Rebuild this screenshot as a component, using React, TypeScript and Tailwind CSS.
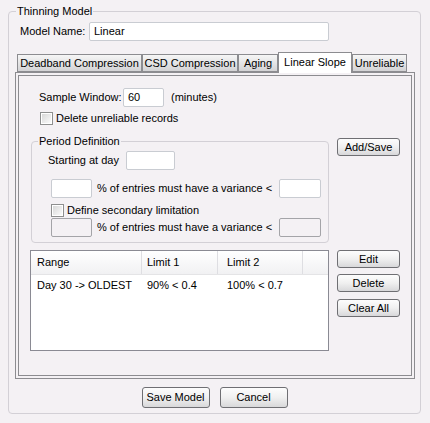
import React from "react";

const font = "font-['Liberation_Sans',Arial,sans-serif]";

function Btn({ label, w }: { label: string; w: string }) {
  return (
    <button
      className={`${w} h-[18px] flex items-center justify-center rounded-[3px] border border-[#6f6f73] bg-gradient-to-b from-[#fdfdfd] via-[#f0f0f0] to-[#d8d8da] text-[11px] leading-none text-black`}
    >
      {label}
    </button>
  );
}

function CheckBox({ label }: { label: string }) {
  return (
    <div className="flex items-center h-[13px]">
      <div className="w-[13px] h-[13px] border border-[#8e8f8f] bg-white p-[1px]">
        <div className="w-full h-full bg-gradient-to-br from-[#d8d8d8] to-[#fbfbfb]" />
      </div>
      <span className="ml-[3px] text-[11px] leading-none">{label}</span>
    </div>
  );
}

function Field({ w, disabled, value }: { w: string; disabled?: boolean; value?: string }) {
  return (
    <div
      className={`${w} h-[19px] rounded-[2px] border flex items-center pl-[4px] text-[11px] ${
        disabled ? "border-[#a4a4a8] bg-[#f4f1f4]" : "border-[#c9ccd2] bg-white"
      }`}
    >
      {value}
    </div>
  );
}

const tabs = [
  { name: "Deadband Compression", w: "w-[125px]" },
  { name: "CSD Compression", w: "w-[96px]" },
  { name: "Aging", w: "w-[40px]" },
  { name: "Linear Slope", w: "w-[74px]", active: true },
  { name: "Unreliable", w: "w-[55px]" },
];

const rows = [{ range: "Day 30 -> OLDEST", l1: "90% < 0.4", l2: "100% < 0.7" }];

export default function App() {
  return (
    <div className={`w-[430px] h-[423px] bg-[#f4f1f4] pt-[11px] pl-[8px] text-black ${font}`}>
      <div className="relative w-[413px] h-[403px] rounded-[4px] border border-[#d3d0d6]">
        <span className="absolute -top-[8px] left-[7px] px-[1px] bg-[#f4f1f4] text-[11px] leading-[14px]">
          Thinning Model
        </span>

        {/* model name */}
        <div className="flex items-center mt-[10px] pl-[11px]">
          <span className="w-[69px] text-[11px]">Model Name:</span>
          <Field w="w-[240px]" value="Linear" />
        </div>

        {/* tabs + panel */}
        <div className="ml-[6px] mt-[10px] w-[400px]">
          <div className="flex items-end h-[21px] pl-[2px]">
            {tabs.map((t) =>
              t.active ? (
                <div
                  key={t.name}
                  className={`${t.w} h-[21px] -mb-[1px] relative z-10 border border-b-0 border-[#8c8c90] bg-white flex items-start justify-center pt-[3px] text-[11px] leading-[13px]`}
                >
                  {t.name}
                </div>
              ) : (
                <div
                  key={t.name}
                  className={`${t.w} h-[18px] border border-[#8c8c90] bg-gradient-to-b from-[#f6f6f6] to-[#d3d3d5] flex items-center justify-center text-[11px] leading-none`}
                >
                  {t.name}
                </div>
              )
            )}
          </div>
          <div className="h-[307px] border border-[#8c8c90] p-[2px]">
            <div className="h-full border border-[#8c8c90]">
              {/* sample window */}
              <div className="flex items-center mt-[12px] pl-[20px]">
                <span className="w-[84px] text-[11px]">Sample Window:</span>
                <Field w="w-[41px]" value="60" />
                <span className="ml-[7px] text-[11px]">(minutes)</span>
              </div>
              <div className="mt-[5px] pl-[21px]">
                <CheckBox label="Delete unreliable records" />
              </div>

              {/* period definition + add/save */}
              <div className="flex items-start mt-[14px] pl-[12px]">
                <div className="relative mt-[2px] w-[298px] h-[102px] rounded-[4px] border border-[#d3d0d6] pl-[16px]">
                  <span className="absolute -top-[8px] left-[6px] px-[1px] bg-[#f4f1f4] text-[11px] leading-[14px]">
                    Period Definition
                  </span>
                  <div className="flex items-center mt-[9px]">
                    <span className="w-[78px] text-[11px]">Starting at day</span>
                    <Field w="w-[49px]" />
                  </div>
                  <div className="flex items-center mt-[9px] pl-[3px]">
                    <Field w="w-[41px]" />
                    <span className="ml-[5px] w-[182px] text-[11px]">% of entries must have a variance &lt;</span>
                    <Field w="w-[42px]" />
                  </div>
                  <div className="mt-[6px] pl-[3px]">
                    <CheckBox label="Define secondary limitation" />
                  </div>
                  <div className="flex items-center mt-[1px] pl-[3px]">
                    <Field w="w-[41px]" disabled />
                    <span className="ml-[5px] w-[182px] text-[11px]">% of entries must have a variance &lt;</span>
                    <Field w="w-[42px]" disabled />
                  </div>
                </div>
                <div className="ml-[8px] -mt-[1px]">
                  <Btn label="Add/Save" w="w-[63px]" />
                </div>
              </div>

              {/* table + actions */}
              <div className="flex items-start mt-[7px] pl-[11px]">
                <div className="w-[299px] h-[101px] border border-[#8a8a93] bg-white">
                  <div className="flex h-[24px] bg-gradient-to-b from-white to-[#f1f1f3] border-b border-[#e4e4e6] text-[11px]">
                    <div className="w-[111px] border-r border-[#dedee2] flex items-center pl-[6px]">Range</div>
                    <div className="w-[76px] border-r border-[#dedee2] flex items-center pl-[5px]">Limit 1</div>
                    <div className="w-[85px] border-r border-[#dedee2] flex items-center pl-[9px]">Limit 2</div>
                    <div className="flex-1" />
                  </div>
                  {rows.map((r) => (
                    <div key={r.range} className="flex h-[20px] items-center text-[11px]">
                      <div className="w-[111px] pl-[6px]">{r.range}</div>
                      <div className="w-[76px] pl-[5px]">{r.l1}</div>
                      <div className="w-[85px] pl-[9px]">{r.l2}</div>
                    </div>
                  ))}
                </div>
                <div className="ml-[8px] flex flex-col">
                  <Btn label="Edit" w="w-[63px]" />
                  <div className="mt-[6px]">
                    <Btn label="Delete" w="w-[63px]" />
                  </div>
                  <div className="mt-[7px]">
                    <Btn label="Clear All" w="w-[63px]" />
                  </div>
                </div>
              </div>
            </div>
          </div>
        </div>

        {/* bottom buttons */}
        <div className="flex justify-center gap-[10px] mt-[8px]">
          <button className="w-[68px] h-[21px] flex items-center justify-center rounded-[3px] border border-[#6f6f73] bg-gradient-to-b from-[#fdfdfd] via-[#f0f0f0] to-[#d8d8da] text-[11px] leading-none">
            Save Model
          </button>
          <button className="w-[68px] h-[21px] flex items-center justify-center rounded-[3px] border border-[#6f6f73] bg-gradient-to-b from-[#fdfdfd] via-[#f0f0f0] to-[#d8d8da] text-[11px] leading-none">
            Cancel
          </button>
        </div>
      </div>
    </div>
  );
}
